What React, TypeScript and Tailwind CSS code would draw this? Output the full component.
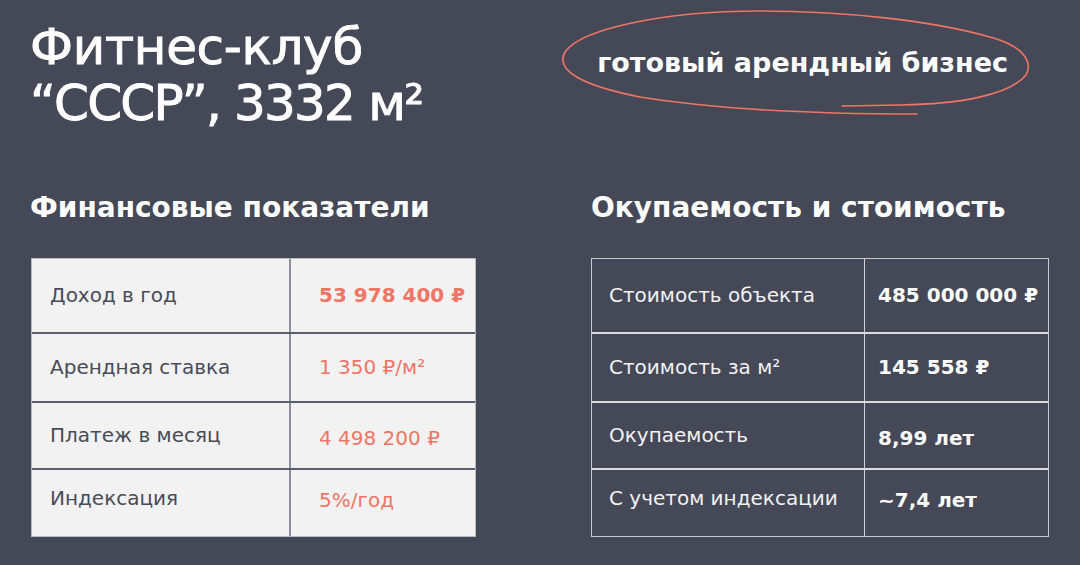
const font = "font-['DejaVu_Sans',sans-serif]";

type Row = { label: string; value: string; rowH: string; ptL: string; ptV: string };

const finance: Row[] = [
  { label: 'Доход в год', value: '53 978 400 ₽', rowH: 'h-[73px]', ptL: 'pt-[24px]', ptV: 'pt-[24px]' },
  { label: 'Арендная ставка', value: '1 350 ₽/м²', rowH: 'h-[69px]', ptL: 'pt-[21px]', ptV: 'pt-[21px]' },
  { label: 'Платеж в месяц', value: '4 498 200 ₽', rowH: 'h-[67px]', ptL: 'pt-[20px]', ptV: 'pt-[23px]' },
  { label: 'Индексация', value: '5%/год', rowH: 'h-[68px]', ptL: 'pt-[16px]', ptV: 'pt-[18px]' },
];

const payback: Row[] = [
  { label: 'Стоимость объекта', value: '485 000 000 ₽', rowH: 'h-[73px]', ptL: 'pt-[24px]', ptV: 'pt-[24px]' },
  { label: 'Стоимость за м²', value: '145 558 ₽', rowH: 'h-[69px]', ptL: 'pt-[21px]', ptV: 'pt-[21px]' },
  { label: 'Окупаемость', value: '8,99 лет', rowH: 'h-[67px]', ptL: 'pt-[20px]', ptV: 'pt-[23px]' },
  { label: 'С учетом индексации', value: '~7,4 лет', rowH: 'h-[68px]', ptL: 'pt-[16px]', ptV: 'pt-[18px]' },
];

export default function App() {
  return (
    <div className={`${font} relative w-[1080px] h-[565px] overflow-hidden bg-[#454857] text-white`}>
      {/* hand-drawn ring around the badge */}
      <svg className="absolute left-0 top-0 pointer-events-none" width="1080" height="130" viewBox="0 0 1080 130" fill="none">
        <path
          d="M842 106 L900 105 C960 104 1010 95 1026 75 C1034 60 1020 45 990 37 C930 20 840 11 760 11 C660 11 580 30 565 52 C555 70 580 85 640 97 C720 110 830 114 917 114"
          stroke="#f07565"
          strokeWidth="1.6"
          strokeLinecap="round"
        />
      </svg>

      <div className="flex items-start justify-between pl-[30px] pr-[72px] pt-[19px]">
        <h1 className="text-[50px] leading-[56px] font-normal tracking-[-0.3px] [-webkit-text-stroke:0.9px_white]">
          <div>Фитнес-клуб</div>
          <div className="tracking-[-1.8px]">“СССР”, 3332 м²</div>
        </h1>
        <div className="pt-[27px] text-[27px] leading-[34px] font-bold">готовый арендный бизнес</div>
      </div>

      <div className="flex pl-[31px] pt-[60px] gap-[115px]">
        <div className="w-[445px]">
          <h2 className="text-[28px] leading-[34px] font-bold -ml-[1px]">Финансовые показатели</h2>
          <div className="mt-[33px] bg-[#f2f2f2] border border-[#b9bbc1]">
            {finance.map((r, i) => (
              <div
                key={r.label}
                className={`flex ${r.rowH} ${i > 0 ? 'border-t-2 border-[#5a5d6a]' : ''}`}
              >
                <div className={`w-[259px] border-r-2 border-[#8d8f98] pl-[18px] ${r.ptL} text-[20px] leading-[24px] text-[#484b58]`}>
                  {r.label}
                </div>
                <div
                  className={`flex-1 pl-[28px] ${r.ptV} text-[20px] leading-[24px] text-[#f07565] ${i === 0 ? 'font-bold' : ''}`}
                >
                  {r.value}
                </div>
              </div>
            ))}
          </div>
        </div>

        <div className="w-[458px]">
          <h2 className="text-[28px] leading-[34px] font-bold">Окупаемость и стоимость</h2>
          <div className="mt-[33px] border border-[#c9cacf]">
            {payback.map((r, i) => (
              <div key={r.label} className={`flex ${r.rowH} ${i > 0 ? 'border-t-2 border-[#dcdcdf]' : ''}`}>
                <div className={`w-[273px] border-r border-[#cfd0d4] pl-[17px] ${r.ptL} text-[20px] leading-[24px] text-[#f2f2f2]`}>
                  {r.label}
                </div>
                <div className={`flex-1 pl-[13px] ${r.ptV} text-[20px] leading-[24px] font-bold text-white`}>
                  {r.value}
                </div>
              </div>
            ))}
          </div>
        </div>
      </div>
    </div>
  );
}
